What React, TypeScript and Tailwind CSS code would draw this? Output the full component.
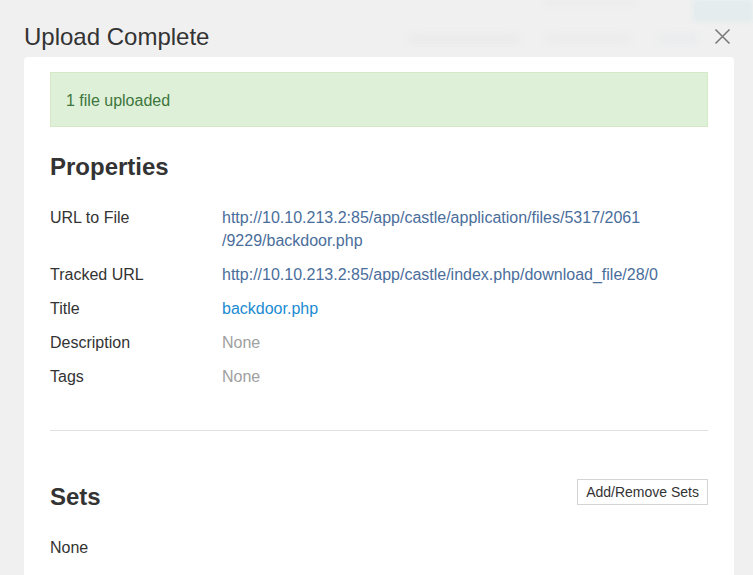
import React from "react";

export default function App() {
  return (
    <div className="relative h-[575px] w-full overflow-hidden bg-[#f0f0f0] font-['Liberation_Sans',Arial,sans-serif] text-[#333]">
      {/* faint backdrop of the page behind the modal */}
      <div className="absolute left-[693px] top-0 h-[22px] w-[60px] rounded-bl-[4px] bg-[#e4eced] blur-[2px]" />
      <div className="absolute left-[545px] top-0 h-[6px] w-[90px] bg-[#ececec] blur-[2px]" />
      <div className="absolute left-[408px] top-[34px] h-[10px] w-[112px] rounded bg-[#ebebeb] blur-[3px]" />
      <div className="absolute left-[545px] top-[34px] h-[10px] w-[86px] rounded bg-[#ececec] blur-[3px]" />
      <div className="absolute left-[658px] top-[34px] h-[10px] w-[40px] rounded bg-[#eaeced] blur-[3px]" />

      <div className="relative flex h-[57px] items-start justify-between pl-[24px] pr-[22px] pt-[24px]">
        <h1 className="text-[24px] font-normal leading-[26.4px] text-[#333]">Upload Complete</h1>
        <svg width="17" height="17" viewBox="0 0 17 17" className="mt-[4px]" fill="none">
          <path d="M1.5 1.5 L15.5 15.5 M15.5 1.5 L1.5 15.5" stroke="#777" strokeWidth="1.5" />
        </svg>
      </div>

      <div className="relative ml-[24px] mr-[19px] rounded-[4px] bg-white px-[26px] pt-[15px] pb-[40px]">
        <div className="border border-[#d6e9c6] bg-[#dff0d8] px-[15px] pt-[16px] pb-[14px] text-[16px] leading-[23px] text-[#3c763d]">
          1 file uploaded
        </div>

        <h2 className="mt-[26.5px] text-[24px] font-bold leading-[26.4px] text-[#333]">Properties</h2>

        <div className="mt-[26.4px] flex flex-col gap-[11px] text-[16px] leading-[23px]">
          <div className="flex">
            <div className="w-[172px] shrink-0">URL to File</div>
            <div className="text-[#4a6e9b]">
              http://10.10.213.2:85/app/castle/application/files/5317/2061
              <br />
              /9229/backdoor.php
            </div>
          </div>
          <div className="flex">
            <div className="w-[172px] shrink-0">Tracked URL</div>
            <div className="text-[#4a6e9b]">http://10.10.213.2:85/app/castle/index.php/download_file/28/0</div>
          </div>
          <div className="flex">
            <div className="w-[172px] shrink-0">Title</div>
            <div className="text-[#1b8bd2]">backdoor.php</div>
          </div>
          <div className="flex">
            <div className="w-[172px] shrink-0">Description</div>
            <div className="text-[#a0a0a0]">None</div>
          </div>
          <div className="flex">
            <div className="w-[172px] shrink-0">Tags</div>
            <div className="text-[#a0a0a0]">None</div>
          </div>
        </div>

        <div className="mt-[42px] border-t border-[#e0e0e0]" />

        <div className="mt-[48px] flex items-start justify-between">
          <h3 className="mt-[4.5px] text-[24px] font-bold leading-[26.4px] text-[#333]">Sets</h3>
          <button className="h-[26px] border border-[#d4d4d4] bg-white px-[8px] text-[14px] leading-[24px] text-[#333]">
            Add/Remove Sets
          </button>
        </div>

        <div className="mt-[26px] text-[16px] leading-[23px] text-[#333]">None</div>
      </div>
    </div>
  );
}
